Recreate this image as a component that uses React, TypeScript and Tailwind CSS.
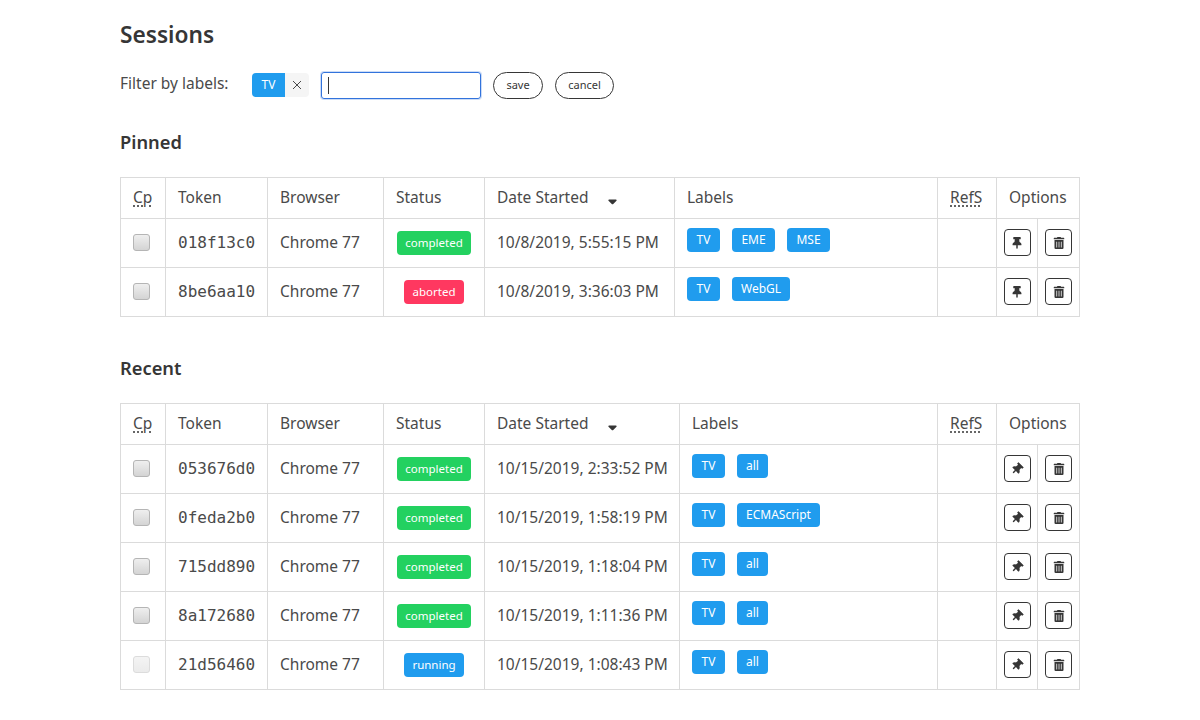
import { FaThumbtack, FaTrashAlt, FaSortDown } from 'react-icons/fa';

type Session = {
  token: string;
  started: string;
  status: 'completed' | 'aborted' | 'running';
  labels: string[];
};

const pinned: Session[] = [
  { token: '018f13c0', started: '10/8/2019, 5:55:15 PM', status: 'completed', labels: ['TV', 'EME', 'MSE'] },
  { token: '8be6aa10', started: '10/8/2019, 3:36:03 PM', status: 'aborted', labels: ['TV', 'WebGL'] },
];

const recent: Session[] = [
  { token: '053676d0', started: '10/15/2019, 2:33:52 PM', status: 'completed', labels: ['TV', 'all'] },
  { token: '0feda2b0', started: '10/15/2019, 1:58:19 PM', status: 'completed', labels: ['TV', 'ECMAScript'] },
  { token: '715dd890', started: '10/15/2019, 1:18:04 PM', status: 'completed', labels: ['TV', 'all'] },
  { token: '8a172680', started: '10/15/2019, 1:11:36 PM', status: 'completed', labels: ['TV', 'all'] },
  { token: '21d56460', started: '10/15/2019, 1:08:43 PM', status: 'running', labels: ['TV', 'all'] },
];

function StatusTag({ status }: { status: Session['status'] }) {
  if (status === 'completed') {
    return <span className="flex h-6 w-[74px] items-center justify-center rounded bg-[#23d160] text-[11.5px] text-white">completed</span>;
  }
  if (status === 'aborted') {
    return <span className="flex h-6 w-[60px] items-center justify-center rounded bg-[#ff3860] text-[11.5px] text-white">aborted</span>;
  }
  return <span className="flex h-6 w-[60px] items-center justify-center rounded bg-[#209cee] text-[11.5px] text-white">running</span>;
}

function Abbr({ children }: { children: string }) {
  return <span className="underline decoration-dotted decoration-[#363636] underline-offset-2">{children}</span>;
}

function labelClass(label: string) {
  if (label === 'EME' || label === 'MSE') {
    return 'inline-flex h-6 w-[43px] items-center justify-center rounded bg-[#209cee] text-xs text-white';
  }
  if (label === 'TV') {
    return 'inline-flex h-6 w-[33px] items-center justify-center rounded bg-[#209cee] text-xs text-white';
  }
  return 'inline-flex h-6 items-center rounded bg-[#209cee] px-[9px] text-xs text-white';
}

function SessionTable({ sessions, recentTable }: { sessions: Session[]; recentTable?: boolean }) {
  const th = 'h-[41px] border border-[#dbdbdb] px-3 text-left text-[15.5px] font-normal';
  const td = 'h-[49px] border border-[#dbdbdb] text-[15.5px]';
  return (
    <table className="w-[959px] table-fixed border-collapse text-[#4a4a4a]">
      <colgroup>
        <col className="w-[45px]" />
        <col className="w-[102px]" />
        <col className="w-[116px]" />
        <col className="w-[101px]" />
        <col className={recentTable ? 'w-[195px]' : 'w-[190px]'} />
        <col className={recentTable ? 'w-[258px]' : 'w-[263px]'} />
        <col className="w-[59px]" />
        <col className="w-[41px]" />
        <col className="w-[42px]" />
      </colgroup>
      <thead>
        <tr>
          <th className={th}><Abbr>Cp</Abbr></th>
          <th className={th}>Token</th>
          <th className={th}>Browser</th>
          <th className={th}>Status</th>
          <th className={th}>
            <span className="flex items-center">
              Date Started
              <FaSortDown className="ml-[17px] text-[15px] text-[#363636]" />
            </span>
          </th>
          <th className={th}>Labels</th>
          <th className={th}><Abbr>RefS</Abbr></th>
          <th colSpan={2} className={th + ' text-center'}>Options</th>
        </tr>
      </thead>
      <tbody>
        {sessions.map((s) => (
          <tr key={s.token}>
            <td className={td + ' px-3 pt-[15px] align-top'}>
              <input
                type="checkbox"
                disabled={s.status === 'running'}
                className="block h-[17px] w-[17px] appearance-none rounded-[3px] border border-[#b5b5b5] bg-gradient-to-b from-[#efefef] to-[#d4d4d4] disabled:border-[#dcdcdc] disabled:from-[#f4f4f4] disabled:to-[#ebebeb]"
              />
            </td>
            <td className={td + ' px-3 font-["DejaVu_Sans_Mono",monospace] text-[16px]'}>{s.token}</td>
            <td className={td + ' px-3'}>Chrome 77</td>
            <td className={td + ' px-3 pt-3 align-top'}>
              <div className="flex justify-center">
                <StatusTag status={s.status} />
              </div>
            </td>
            <td className={td + ' px-3 whitespace-nowrap'}>{s.started}</td>
            <td className={td + ' px-3 pt-[9px] align-top'}>
              <div className="flex gap-3">
                {s.labels.map((label) => (
                  <span key={label} className={labelClass(label)}>
                    {label}
                  </span>
                ))}
              </div>
            </td>
            <td className={td + ' px-3'}></td>
            <td className={td + ' pt-[10px] align-top'}>
              <button className="mx-auto flex h-[27px] w-[27px] items-center justify-center rounded border border-[#363636] bg-white text-[#363636]">
                <FaThumbtack className={recentTable ? 'rotate-45 text-xs' : 'text-xs'} />
              </button>
            </td>
            <td className={td + ' pt-[10px] align-top'}>
              <button className="mx-auto flex h-[27px] w-[27px] items-center justify-center rounded border border-[#363636] bg-white text-[#363636]">
                <FaTrashAlt className="text-xs" />
              </button>
            </td>
          </tr>
        ))}
      </tbody>
    </table>
  );
}

export default function App() {
  return (
    <div className="h-[720px] w-[1200px] overflow-hidden bg-white px-[120px] pt-[20px] font-['Noto_Sans',sans-serif] text-[#4a4a4a]">
      <h1 className="h-[30px] text-[22.7px] leading-[30px] font-semibold text-[#363636]">Sessions</h1>

      <div className="mt-[21px] flex h-[28px] items-center">
        <span className="mb-[2px] w-[132px] text-[15.5px]">Filter by labels:</span>
        <span className="flex h-6 overflow-hidden rounded">
          <span className="flex w-[33px] items-center justify-center bg-[#209cee] text-xs text-white">TV</span>
          <span className="flex w-[24px] items-center justify-center bg-[#f5f5f5]">
            <svg width="10" height="10" viewBox="0 0 10 10" stroke="#4a4a4a" strokeWidth="1">
              <path d="M1 1l8 8M9 1l-8 8" />
            </svg>
          </span>
        </span>
        <div className="ml-3 flex h-[27px] w-[160px] items-center rounded-[3px] border border-[#3273dc] pl-[6px] shadow-[0_0_0_1px_rgba(50,115,220,0.25)]">
          <span className="h-[17px] w-px bg-[#363636]" />
        </div>
        <button className="ml-3 h-[27px] w-[50px] rounded-full border border-[#363636] bg-white text-[11px] text-[#363636]">save</button>
        <button className="ml-3 h-[27px] w-[59px] rounded-full border border-[#363636] bg-white text-[11px] text-[#363636]">cancel</button>
      </div>

      <h2 className="mt-[30px] h-[26px] text-[18.3px] leading-[26px] font-semibold text-[#363636]">Pinned</h2>
      <div className="mt-[22px]">
        <SessionTable sessions={pinned} />
      </div>

      <h2 className="mt-[38px] h-[26px] text-[18.3px] leading-[26px] font-semibold text-[#363636]">Recent</h2>
      <div className="mt-[22px]">
        <SessionTable sessions={recent} recentTable />
      </div>
    </div>
  );
}
